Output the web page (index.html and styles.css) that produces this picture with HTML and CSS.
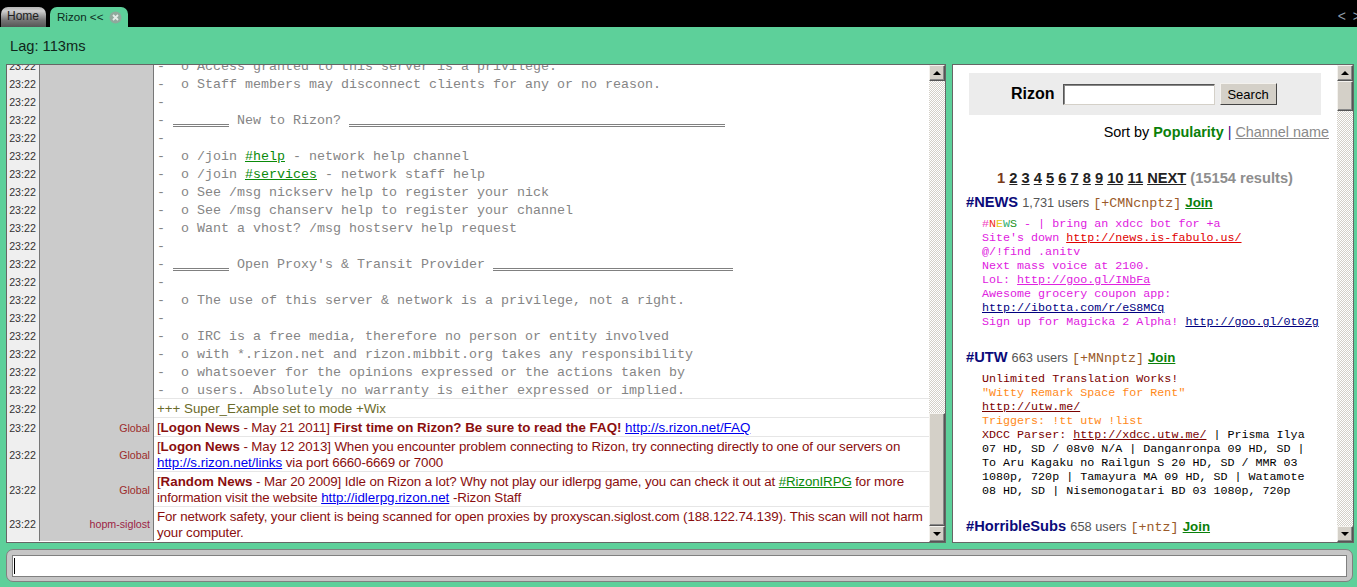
FILE: index.html
```html
<!DOCTYPE html>
<html lang="en">
<head>
<meta charset="utf-8">
<title>Rizon</title>
<link rel="stylesheet" href="styles.css">
</head>
<body>
<header class="tabbar">
  <div class="tab tab-home">Home</div>
  <div class="tab tab-active">Rizon &lt;&lt;
    <svg class="tab-close" width="13" height="13" viewBox="0 0 13 13"><circle cx="6.5" cy="6.5" r="6" fill="#8fa89c"/><path d="M4 4l5 5M9 4l-5 5" stroke="#e4ece8" stroke-width="1.8"/></svg>
  </div>
  <div class="tab-arrows">&lt; &gt;</div>
</header>
<div class="status">Lag: 113ms</div>
<main class="main">
  <section class="panel chat">
    <div class="log">
      <div class="row"><div class="time">23:22</div><div class="nick"></div><div class="msg motd">-  o Access granted to this server is a privilege.</div></div>
      <div class="row"><div class="time">23:22</div><div class="nick"></div><div class="msg motd">-  o Staff members may disconnect clients for any or no reason.</div></div>
      <div class="row"><div class="time">23:22</div><div class="nick"></div><div class="msg motd">-</div></div>
      <div class="row"><div class="time">23:22</div><div class="nick"></div><div class="msg motd">- <span class="rule r7"></span> New to Rizon? <span class="rule r47"></span></div></div>
      <div class="row"><div class="time">23:22</div><div class="nick"></div><div class="msg motd">-</div></div>
      <div class="row"><div class="time">23:22</div><div class="nick"></div><div class="msg motd">-  o /join <a class="chan" href="#">#help</a> - network help channel</div></div>
      <div class="row"><div class="time">23:22</div><div class="nick"></div><div class="msg motd">-  o /join <a class="chan" href="#">#services</a> - network staff help</div></div>
      <div class="row"><div class="time">23:22</div><div class="nick"></div><div class="msg motd">-  o See /msg nickserv help to register your nick</div></div>
      <div class="row"><div class="time">23:22</div><div class="nick"></div><div class="msg motd">-  o See /msg chanserv help to register your channel</div></div>
      <div class="row"><div class="time">23:22</div><div class="nick"></div><div class="msg motd">-  o Want a vhost? /msg hostserv help request</div></div>
      <div class="row"><div class="time">23:22</div><div class="nick"></div><div class="msg motd">-</div></div>
      <div class="row"><div class="time">23:22</div><div class="nick"></div><div class="msg motd">- <span class="rule r7"></span> Open Proxy's &amp; Transit Provider <span class="rule r30"></span></div></div>
      <div class="row"><div class="time">23:22</div><div class="nick"></div><div class="msg motd">-</div></div>
      <div class="row"><div class="time">23:22</div><div class="nick"></div><div class="msg motd">-  o The use of this server &amp; network is a privilege, not a right.</div></div>
      <div class="row"><div class="time">23:22</div><div class="nick"></div><div class="msg motd">-</div></div>
      <div class="row"><div class="time">23:22</div><div class="nick"></div><div class="msg motd">-  o IRC is a free media, therefore no person or entity involved</div></div>
      <div class="row"><div class="time">23:22</div><div class="nick"></div><div class="msg motd">-  o with *.rizon.net and rizon.mibbit.org takes any responsibility</div></div>
      <div class="row"><div class="time">23:22</div><div class="nick"></div><div class="msg motd">-  o whatsoever for the opinions expressed or the actions taken by</div></div>
      <div class="row"><div class="time">23:22</div><div class="nick"></div><div class="msg motd msg-sep">-  o users. Absolutely no warranty is either expressed or implied.</div></div>
      <div class="row"><div class="time">23:22</div><div class="nick"></div><div class="msg mode msg-sep">+++ Super_Example set to mode +Wix</div></div>
      <div class="row"><div class="time">23:22</div><div class="nick nick-global">Global</div><div class="msg notice msg-sep">[<b>Logon News</b> - May 21 2011] <b>First time on Rizon? Be sure to read the FAQ!</b> <a class="link" href="#">http://s.rizon.net/FAQ</a></div></div>
      <div class="row"><div class="time">23:22</div><div class="nick nick-global">Global</div><div class="msg notice msg-sep">[<b>Logon News</b> - May 12 2013] When you encounter problem connecting to Rizon, try connecting directly to one of our servers on<br><a class="link" href="#">http://s.rizon.net/links</a> via port 6660-6669 or 7000</div></div>
      <div class="row"><div class="time">23:22</div><div class="nick nick-global">Global</div><div class="msg notice msg-sep">[<b>Random News</b> - Mar 20 2009] Idle on Rizon a lot? Why not play our idlerpg game, you can check it out at <a class="chan-alt" href="#">#RizonIRPG</a> for more<br>information visit the website <a class="link" href="#">http://idlerpg.rizon.net</a> -Rizon Staff</div></div>
      <div class="row"><div class="time">23:22</div><div class="nick nick-hopm">hopm-siglost</div><div class="msg notice">For network safety, your client is being scanned for open proxies by proxyscan.siglost.com (188.122.74.139). This scan will not harm<br>your computer.</div></div>
    </div>
    <div class="scrollbar">
      <div class="sb-btn sb-up"></div>
      <div class="sb-track sb-track-chat"></div>
      <div class="sb-thumb sb-thumb-chat"></div>
      <div class="sb-btn sb-down"></div>
    </div>
  </section>
  <section class="panel side">
    <div class="directory">
      <form class="search">
        <span class="search-title">Rizon</span>
        <span class="search-input"></span>
        <span class="search-btn">Search</span>
      </form>
      <p class="sort">Sort by <b class="sort-on">Popularity</b> <span class="sort-bar">|</span> <a class="sort-link" href="#">Channel name</a></p>
      <p class="pages"><span class="page-cur">1</span> <a href="#">2</a> <a href="#">3</a> <a href="#">4</a> <a href="#">5</a> <a href="#">6</a> <a href="#">7</a> <a href="#">8</a> <a href="#">9</a> <a href="#">10</a> <a href="#">11</a> <a href="#">NEXT</a> <span class="page-count">(15154 results)</span></p>

      <h3 class="ch"><span class="ch-name">#NEWS</span> <span class="ch-users">1,731 users</span> <span class="ch-modes">[+CMNcnptz]</span> <a class="ch-join" href="#">Join</a></h3>
      <div class="topic topic-news">
        <div><span class="c-pink">#</span><span class="c-red">N</span><span class="c-yel">E</span><span class="c-teal">W</span><span class="c-grn">S</span> <span class="c-mag">- | bring an xdcc bot for +a</span></div>
        <div class="c-mag">Site's down <a class="t-red" href="#">http://news.is-fabulo.us/</a></div>
        <div class="c-mag">@/!find .anitv</div>
        <div class="c-mag">Next mass voice at 2100.</div>
        <div class="c-mag">LoL: <a class="t-mag" href="#">http://goo.gl/INbFa</a></div>
        <div class="c-mag">Awesome grocery coupon app:</div>
        <div><a class="t-navy" href="#">http://ibotta.com/r/eS8MCq</a></div>
        <div class="c-mag">Sign up for Magicka 2 Alpha! <a class="t-navy" href="#">http://goo.gl/0t0Zg</a></div>
      </div>

      <h3 class="ch ch-utw"><span class="ch-name">#UTW</span> <span class="ch-users">663 users</span> <span class="ch-modes">[+MNnptz]</span> <a class="ch-join" href="#">Join</a></h3>
      <div class="topic topic-utw">
        <div class="c-maroon">Unlimited Translation Works!</div>
        <div class="c-orange">"Witty Remark Space for Rent"</div>
        <div><a class="t-maroon" href="#">http://utw.me/</a></div>
        <div class="c-orange">Triggers: !tt utw !list</div>
        <div><span class="c-maroon">XDCC Parser: <a class="t-maroon" href="#">http://xdcc.utw.me/</a></span> | Prisma Ilya</div>
        <div>07 HD, SD / 08v0 N/A | Danganronpa 09 HD, SD |</div>
        <div>To Aru Kagaku no Railgun S 20 HD, SD / MMR 03</div>
        <div>1080p, 720p | Tamayura MA 09 HD, SD | Watamote</div>
        <div>08 HD, SD | Nisemonogatari BD 03 1080p, 720p</div>
      </div>

      <h3 class="ch ch-hs"><span class="ch-name">#HorribleSubs</span> <span class="ch-users">658 users</span> <span class="ch-modes">[+ntz]</span> <a class="ch-join" href="#">Join</a></h3>
    </div>
    <div class="scrollbar">
      <div class="sb-btn sb-up"></div>
      <div class="sb-thumb sb-thumb-side"></div>
      <div class="sb-track sb-track-side"></div>
      <div class="sb-btn sb-down"></div>
    </div>
  </section>
</main>
<footer class="inputbar">
  <div class="input"><span class="caret"></span></div>
</footer>
</body>
</html>
```

FILE: styles.css
```css
* { box-sizing: border-box; }
html, body { margin: 0; padding: 0; height: 100%; }
body {
  display: flex;
  flex-direction: column;
  width: 1357px;
  height: 587px;
  overflow: hidden;
  background: #5dd09a;
  color: #000;
  font-family: "Liberation Sans", Arial, sans-serif;
}

/* Tabs */
.tabbar {
  height: 27px;
  flex: none;
  background: #000;
  display: flex;
  align-items: flex-end;
  padding-left: 1px;
  font-size: 12px;
  overflow: hidden;
}
.tab {
  height: 20px;
  padding-bottom: 2px;
  border-radius: 7px 7px 0 0;
  display: flex;
  align-items: center;
}
.tab-home {
  width: 45px;
  padding-left: 6px;
  color: #222;
  background: linear-gradient(#b4b4b4, #d0d0d0 20%, #777 65%, #555);
}
.tab-active {
  width: 78px;
  margin-left: 4px;
  padding-left: 7px;
  background: #5dd09a;
  color: #0c2a1c;
  font-size: 11.6px;
}
.tab-close { margin-left: 6px; margin-top: 2px; }
.tab-arrows {
  flex: none;
  margin-left: auto;
  margin-right: -4px;
  align-self: flex-start;
  padding-top: 8px;
  color: #8d9aa8;
  font-size: 14px;
  word-spacing: 3px;
  white-space: pre;
}

/* Status */
.status {
  height: 37px;
  flex: none;
  padding: 11px 0 0 10px;
  font-size: 14.67px;
  line-height: 17px;
  color: #10261b;
}

/* Main */
.main {
  height: 479px;
  flex: none;
  display: flex;
  gap: 6px;
  padding-left: 6px;
}
.panel {
  display: flex;
  background: #fff;
  border: 1px solid #666;
  overflow: hidden;
}
.chat { width: 940px; }
.side { width: 402px; }

.log {
  flex: 1;
  min-width: 0;
  margin-top: -8px;
}
.row { display: flex; }
.time {
  width: 33px;
  flex: none;
  padding-right: 1px;
  background: #efefef;
  border-right: 1px solid #777;
  display: flex;
  align-items: center;
  justify-content: center;
  font-size: 10.67px;
  color: #333;
}
.nick {
  width: 114px;
  flex: none;
  background: #cbcbcb;
  border-right: 1px solid #777;
  display: flex;
  align-items: center;
  justify-content: flex-end;
  padding-right: 3px;
  font-size: 10.67px;
}
.nick-global { color: #9c2b2b; }
.nick-hopm { color: #9c1f45; }
.msg {
  flex: 1;
  min-width: 0;
  padding-left: 3px;
  white-space: pre;
}
.msg-sep { border-bottom: 1px solid #e6e6e6; }
.motd {
  height: 18px;
  padding-top: 1px;
  font-family: "Liberation Mono", "Courier New", monospace;
  font-size: 13.33px;
  line-height: 18px;
  color: #858585;
}
.rule {
  display: inline-block;
  height: 12px;
  border-bottom: 3px double #808080;
  vertical-align: -3px;
}
.r7 { width: 56px; }
.r47 { width: 376px; }
.r30 { width: 240px; }
.chan { color: #0a8a0a; }
.mode, .notice {
  padding-top: 2px;
  font-size: 13.33px;
  line-height: 16px;
}
.mode { color: #6b6b2a; }
.notice { color: #8a0e0e; letter-spacing: -0.11px; }
.notice b, .notice .link { letter-spacing: 0; }
.link { color: #0000ee; }
.chan-alt { color: #0a8a0a; }

/* Scrollbars */
.scrollbar {
  width: 16px;
  flex: none;
  display: flex;
  flex-direction: column;
}
.sb-btn, .sb-thumb {
  background: #d4d0c8;
  border: 1px solid;
  border-color: #f4f2ee #555 #555 #f4f2ee;
  box-shadow: inset -1px -1px 0 #888;
}
.sb-btn {
  height: 16px;
  flex: none;
  display: flex;
  align-items: center;
  justify-content: center;
}
.sb-up::before, .sb-down::before {
  content: "";
  border-left: 4px solid transparent;
  border-right: 4px solid transparent;
}
.sb-up::before { border-bottom: 4px solid #000; }
.sb-down::before { border-top: 4px solid #000; }
.sb-track {
  background: repeating-conic-gradient(#d4d0c8 0 25%, #fff 0 50%) 0 0 / 2px 2px;
}
.sb-track-chat { height: 332px; flex: none; }
.sb-thumb-chat { flex: 1; }
.sb-thumb-side { height: 30px; flex: none; }
.sb-track-side { flex: 1; }

/* Directory */
.directory {
  flex: 1;
  min-width: 0;
  overflow: hidden;
  padding: 8px 8px 0 13px;
}
.search {
  width: 352px;
  height: 42px;
  margin-left: 3px;
  background: #ececec;
  display: flex;
  align-items: center;
  padding: 0 0 0 42px;
}
.search-title { font-size: 16px; font-weight: bold; }
.search-input {
  width: 152px;
  height: 21px;
  margin-left: 8px;
  background: #fff;
  border: 1px solid;
  border-color: #555 #d4d0c8 #d4d0c8 #555;
  box-shadow: inset 1px 1px 0 #888;
}
.search-btn {
  width: 57px;
  height: 22px;
  margin-left: 5px;
  background: #d4d0c8;
  border: 1px solid;
  border-color: #f4f2ee #444 #444 #f4f2ee;
  font-size: 13px;
  line-height: 21px;
  text-align: center;
}
.sort {
  margin: 8px 0 0;
  text-align: right;
  font-size: 14.4px;
  line-height: 18px;
}
.sort-on { color: #0a800a; }
.sort-bar { color: #4b0082; }
.sort-link { color: #8a8a8a; }
.pages {
  margin: 28px 0 0;
  width: 358px;
  text-align: center;
  font-size: 14.67px;
  line-height: 18px;
  font-weight: bold;
  color: #333;
}
.pages a { color: #222; }
.page-cur { color: #7a3a1a; }
.page-count { color: #8e8e8e; }
.ch {
  margin: 6px 0 0;
  font-size: 14.67px;
  line-height: 18px;
  font-weight: normal;
  white-space: pre;
}
.ch-utw { margin-top: 19px; }
.ch-hs { margin-top: 19px; }
.ch-name { color: #0a0a7a; font-weight: bold; }
.ch-users { color: #555; font-size: 12.8px; }
.ch-modes {
  color: #9a5a2a;
  font-family: "Liberation Mono", "Courier New", monospace;
  font-size: 13.33px;
}
.ch-join { color: #0a800a; font-size: 13.33px; font-weight: bold; }
.topic {
  margin: 4px 0 0 16px;
  font-family: "Liberation Mono", "Courier New", monospace;
  font-size: 11.7px;
  line-height: 14px;
  color: #000;
}
.topic > div { white-space: pre; }
.c-pink { color: #f040c0; }
.c-red { color: #f03020; }
.c-yel { color: #e8c820; }
.c-teal { color: #30b070; }
.c-grn { color: #209020; }
.c-mag { color: #e020e0; }
.c-maroon { color: #7a0000; }
.c-orange { color: #ff8a1a; }
.t-red { color: #e00000; }
.t-mag { color: #e020e0; }
.t-navy { color: #00007f; }
.t-maroon { color: #7a0000; }

/* Input */
.inputbar {
  height: 33px;
  flex: none;
  margin: 6px 4px 0 6px;
  padding: 5px 5px;
  background: #c6c6c6;
  border: 1px solid #808080;
  border-radius: 7px;
}
.input {
  height: 22px;
  background: #fff;
  border: 1px solid #808080;
  display: flex;
  align-items: center;
  padding-left: 1px;
}
.caret {
  width: 1px;
  height: 16px;
  background: #000;
}
```
